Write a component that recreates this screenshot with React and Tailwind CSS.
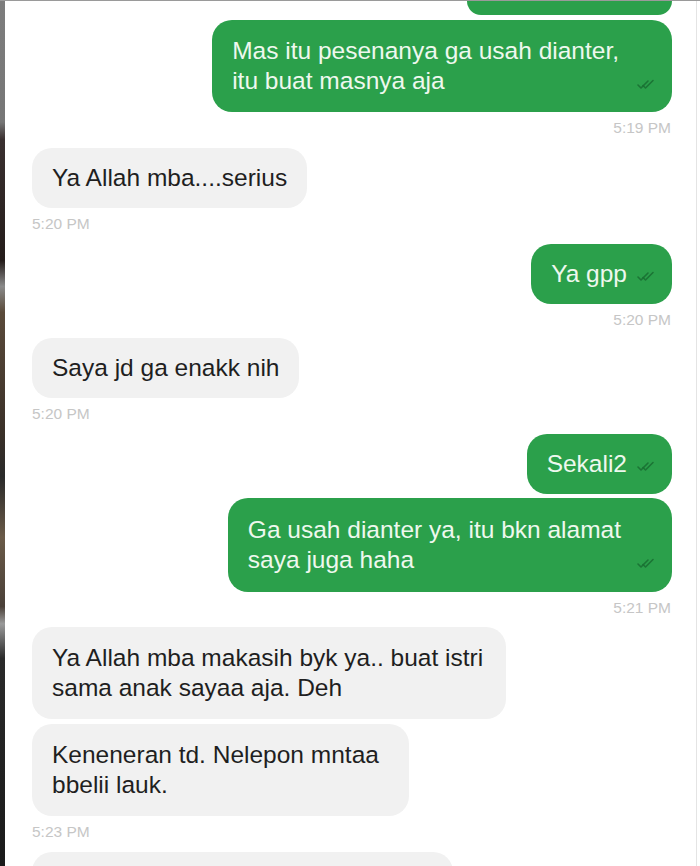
import React from "react";

function Check() {
  return (
    <svg width="20" height="11" viewBox="0 0 20 11" className="shrink-0" fill="none">
      <path d="M2 6 L5 9 L12 2" stroke="#1a7033" strokeWidth="1.6" strokeLinecap="round" strokeLinejoin="round" opacity="0.9" />
      <path d="M7 6.5 L9.5 9 L17 1.5" stroke="#1a7033" strokeWidth="1.6" strokeLinecap="round" strokeLinejoin="round" opacity="0.9" />
    </svg>
  );
}

function TimeRight({ t }) {
  return <div className="shrink-0 mt-[8px] h-[16px] leading-[16px] text-[15.5px] text-[#c6c6c6] self-end mr-[1px]">{t}</div>;
}
function TimeLeft({ t }) {
  return <div className="shrink-0 mt-[8px] h-[16px] leading-[16px] text-[15.5px] text-[#c6c6c6] self-start">{t}</div>;
}

export default function App() {
  return (
    <div className="flex w-[700px] h-[866px] overflow-hidden bg-white border-t border-[#9a9a9a] font-['Liberation_Sans',Arial,sans-serif]">
      <div className="w-[5px] shrink-0 bg-[linear-gradient(to_bottom,#7d7d7d_0%,#767676_14%,#3a3030_16%,#241c1a_30%,#8a8a8a_33%,#5a4a3a_36%,#3a3028_50%,#2a2a2a_55%,#6a5a48_62%,#4a4038_70%,#9a9a9a_72%,#2a2a2a_76%,#1a1a1a_100%)]" />
      <div className="flex-1 flex flex-col pl-[27px] pr-[24px] border-r border-[#e4e4e4]">
        {/* partial top bubble */}
        <div className="shrink-0 self-end w-[205px] h-[14px] bg-[#2ba04b] rounded-b-[20px]" />

        {/* sent 1 */}
        <div className="shrink-0 mt-[5px] self-end flex items-end gap-[17px] bg-[#2ba04b] rounded-[20px] pl-[20px] pr-[16px] py-[16px] text-[24.5px] leading-[30px] text-[#eef8ee]">
          <div>Mas itu pesenanya ga usah dianter,<br />itu buat masnya aja</div>
          <div className="mb-[6px]"><Check /></div>
        </div>
        <TimeRight t="5:19 PM" />

        {/* received */}
        <div className="shrink-0 mt-[12px] self-start bg-[#f1f1f1] rounded-[20px] px-[20px] py-[15px] text-[24.5px] leading-[30px] text-[#1f1f1f]">
          Ya Allah mba....serius
        </div>
        <TimeLeft t="5:20 PM" />

        {/* sent */}
        <div className="shrink-0 mt-[12px] self-end flex items-center gap-[9px] bg-[#2ba04b] rounded-[20px] pl-[20px] pr-[16px] py-[15px] text-[24.5px] leading-[30px] text-[#eef8ee]">
          <div>Ya gpp</div>
          <div className="mt-[4px]"><Check /></div>
        </div>
        <TimeRight t="5:20 PM" />

        {/* received */}
        <div className="shrink-0 mt-[10px] self-start bg-[#f1f1f1] rounded-[20px] px-[20px] py-[15px] text-[24.5px] leading-[30px] text-[#1f1f1f]">
          Saya jd ga enakk nih
        </div>
        <TimeLeft t="5:20 PM" />

        {/* sent */}
        <div className="shrink-0 mt-[12px] self-end flex items-center gap-[9px] bg-[#2ba04b] rounded-[20px] pl-[20px] pr-[16px] py-[15px] text-[24.5px] leading-[30px] text-[#eef8ee]">
          <div>Sekali2</div>
          <div className="mt-[4px]"><Check /></div>
        </div>
        <div className="shrink-0 mt-[4px] self-end flex items-end gap-[15px] bg-[#2ba04b] rounded-[20px] pl-[20px] pr-[16px] py-[17px] text-[24.5px] leading-[30px] text-[#eef8ee]">
          <div>Ga usah dianter ya, itu bkn alamat<br />saya juga haha</div>
          <div className="mb-[6px]"><Check /></div>
        </div>
        <TimeRight t="5:21 PM" />

        {/* received multi */}
        <div className="shrink-0 mt-[11px] self-start bg-[#f1f1f1] rounded-[20px] pl-[20px] pr-[23px] py-[16px] text-[24.5px] leading-[30px] text-[#1f1f1f]">
          Ya Allah mba makasih byk ya.. buat istri<br />sama anak sayaa aja. Deh
        </div>
        <div className="shrink-0 mt-[5px] self-start bg-[#f1f1f1] rounded-[20px] pl-[20px] pr-[30px] py-[16px] text-[24.5px] leading-[30px] text-[#1f1f1f]">
          Keneneran td. Nelepon mntaa<br />bbelii lauk.
        </div>
        <TimeLeft t="5:23 PM" />

        {/* partial bottom bubble */}
        <div className="mt-[12px] self-start w-[421px] h-[60px] shrink-0 bg-[#f1f1f1] rounded-[20px]" />
      </div>
      <div className="w-[3px] shrink-0 bg-white" />
    </div>
  );
}
